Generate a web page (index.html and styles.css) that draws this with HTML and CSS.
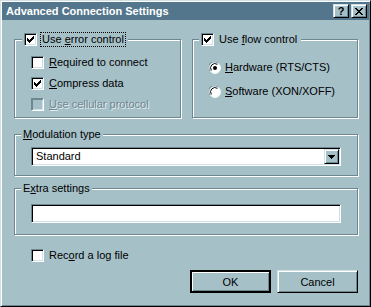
FILE: index.html
```html
<!DOCTYPE html>
<html lang="en">
<head>
  <meta charset="UTF-8" />
  <title>Advanced Connection Settings</title>
  <link rel="stylesheet" href="styles.css">
</head>
<body>

  <div class="window">
    <div class="titlebar">
      <span class="title">Advanced Connection Settings</span>
      <div class="title-buttons">
        <button class="tb-btn">?</button>
        <button class="tb-btn">
          <svg width="8" height="7" viewBox="0 0 8 7" shape-rendering="crispEdges">
            <path d="M0 0h2v1h-2zM6 0h2v1h-2zM1 1h2v1h-2zM5 1h2v1h-2zM2 2h4v1h-4zM3 3h2v1h-2zM2 4h4v1h-4zM1 5h2v1h-2zM5 5h2v1h-2zM0 6h2v1h-2zM6 6h2v1h-2z" fill="#000"/>
          </svg>
        </button>
      </div>
    </div>

    <div class="content">
      <div class="top-row">
        <!-- error control -->
        <div class="group group-error">
          <div class="legend">
            <span class="check checked"></span>
            <span class="focus">Use <u>e</u>rror control</span>
          </div>
          <div class="option"><span class="check"></span><span class="label"><u>R</u>equired to connect</span></div>
          <div class="option"><span class="check checked"></span><span class="label"><u>C</u>ompress data</span></div>
          <div class="option disabled"><span class="check"></span><span class="label"><u>U</u>se cellular protocol</span></div>
        </div>

        <!-- flow control -->
        <div class="group group-flow">
          <div class="legend">
            <span class="check checked"></span>
            <span class="nofocus">Use <u>f</u>low control</span>
          </div>
          <div class="option"><span class="radio on"></span><span class="label"><u>H</u>ardware (RTS/CTS)</span></div>
          <div class="option"><span class="radio"></span><span class="label"><u>S</u>oftware (XON/XOFF)</span></div>
        </div>
      </div>

      <div class="group group-field group-modulation">
        <div class="legend"><u>M</u>odulation type</div>
        <div class="combo">
          <span class="combo-value">Standard</span>
          <span class="combo-btn">
            <svg width="7" height="4" viewBox="0 0 7 4" shape-rendering="crispEdges">
              <path d="M0 0h7v1h-7zM1 1h5v1h-5zM2 2h3v1h-3zM3 3h1v1h-1z" fill="#000"/>
            </svg>
          </span>
        </div>
      </div>

      <div class="group group-field group-extra">
        <div class="legend">E<u>x</u>tra settings</div>
        <div class="textbox"></div>
      </div>

      <div class="option log-row"><span class="check"></span><span class="label">Rec<u>o</u>rd a log file</span></div>

      <div class="buttons">
        <button class="btn default">OK</button>
        <button class="btn">Cancel</button>
      </div>
    </div>
  </div>

</body>
</html>
```

FILE: styles.css
```css
:root {
  --face: #a6c0c8;
  --shadow: #6f8790;
  --light: #d0e0e4;
  --title: #53768c;
}
body {
  margin: 0;
  background: var(--face);
  font-family: 'Liberation Sans', Arial, sans-serif;
  font-size: 11px;
  line-height: 13px;
  color: #000;
}
u {
  text-decoration: underline;
  text-underline-offset: 1px;
}
.window {
  width: 371px;
  height: 307px;
  box-sizing: border-box;
  border: 1px solid;
  border-color: var(--light) #000 #000 var(--light);
  box-shadow: inset 1px 1px 0 #fff, inset -1px -1px 0 var(--shadow);
  padding: 1px;
  background: var(--face);
}
.titlebar {
  height: 18px;
  background: var(--title);
  display: flex;
  align-items: center;
  justify-content: space-between;
  padding: 0 2px 0 4px;
}
.title {
  color: #fff;
  font-weight: bold;
  font-size: 11px;
}
.title-buttons {
  display: flex;
  gap: 2px;
}
.tb-btn {
  width: 16px;
  height: 14px;
  padding: 0;
  margin: 0;
  background: var(--face);
  border: 1px solid;
  border-color: var(--light) #000 #000 var(--light);
  box-shadow: inset 1px 1px 0 #fff, inset -1px -1px 0 var(--shadow);
  font-family: 'Liberation Sans', Arial, sans-serif;
  font-weight: bold;
  font-size: 11px;
  line-height: 11px;
  color: #000;
  display: flex;
  align-items: center;
  justify-content: center;
}
.content {
  padding: 19px 11px 0 12px;
}
.top-row {
  display: grid;
  grid-template-columns: 167px 166px;
  gap: 11px;
}
.group {
  position: relative;
  box-sizing: border-box;
  border: 1px solid var(--shadow);
  box-shadow: inset 1px 1px 0 #fff, 1px 1px 0 #fff;
}
.group-error,
.group-flow {
  height: 79px;
  display: flex;
  flex-direction: column;
  padding-left: 16px;
}
.group-error {
  padding-top: 16px;
  gap: 8px;
}
.group-flow {
  padding-top: 21px;
  gap: 11px;
}
.legend {
  position: absolute;
  top: -7px;
  left: 6px;
  background: var(--face);
  padding: 0 2px;
  display: flex;
  align-items: center;
  height: 13px;
  white-space: nowrap;
}
.group-error .legend,
.group-flow .legend {
  height: 15px;
  top: -8px;
}
.group-error .legend {
  left: 7px;
}
.focus,
.nofocus {
  margin-left: 3px;
  padding: 0 1px;
  border: 1px dotted #000;
  line-height: 13px;
}
.nofocus {
  border-color: transparent;
}
.option {
  display: flex;
  align-items: center;
  height: 13px;
  gap: 5px;
  white-space: nowrap;
}
.option.disabled .label {
  color: var(--shadow);
  text-shadow: 1px 1px 0 #e4eef0;
}
.check {
  width: 13px;
  height: 13px;
  box-sizing: border-box;
  flex: none;
  background: #fff;
  border: 1px solid;
  border-color: var(--shadow) #fff #fff var(--shadow);
  box-shadow: inset 1px 1px 0 #000, inset -1px -1px 0 var(--light);
}
.check.checked {
  background: #fff url("data:image/svg+xml,%3Csvg xmlns='http://www.w3.org/2000/svg' width='7' height='7' shape-rendering='crispEdges'%3E%3Cpath d='M0 2h1v3h-1zM1 3h1v3h-1zM2 4h1v3h-1zM3 3h1v3h-1zM4 2h1v3h-1zM5 1h1v3h-1zM6 0h1v3h-1z' fill='%23000'/%3E%3C/svg%3E") no-repeat 2px 2px;
}
.disabled .check {
  background: var(--face);
  box-shadow: inset 1px 1px 0 var(--shadow), inset -1px -1px 0 var(--light);
  border-color: var(--shadow) #fff #fff var(--shadow);
}
.radio {
  width: 12px;
  height: 12px;
  flex: none;
  background: url("data:image/svg+xml,%3Csvg xmlns='http://www.w3.org/2000/svg' width='12' height='12'%3E%3Ccircle cx='6' cy='6' r='5.5' fill='%23fff' stroke='%23eef4f6'/%3E%3Cpath d='M1.2 9 A5.5 5.5 0 0 1 9 1.2' fill='none' stroke='%236f8790'/%3E%3Cpath d='M2.4 8.4 A4.3 4.3 0 0 1 8.4 2.4' fill='none' stroke='%23000'/%3E%3C/svg%3E") no-repeat;
}
.radio.on {
  background: url("data:image/svg+xml,%3Csvg xmlns='http://www.w3.org/2000/svg' width='12' height='12'%3E%3Ccircle cx='6' cy='6' r='5.5' fill='%23fff' stroke='%23eef4f6'/%3E%3Cpath d='M1.2 9 A5.5 5.5 0 0 1 9 1.2' fill='none' stroke='%236f8790'/%3E%3Cpath d='M2.4 8.4 A4.3 4.3 0 0 1 8.4 2.4' fill='none' stroke='%23000'/%3E%3Ccircle cx='6' cy='6' r='2' fill='%23000'/%3E%3C/svg%3E") no-repeat;
}
.group-flow .option {
  gap: 4px;
}
.group-field {
  padding: 12px 16px 9px;
}
.group-modulation {
  margin-top: 16px;
}
.group-extra {
  margin-top: 12px;
  padding-top: 15px;
  padding-bottom: 11px;
}
.combo,
.textbox {
  height: 19px;
  box-sizing: border-box;
  background: #fff;
  border: 1px solid;
  border-color: var(--shadow) #fff #fff var(--shadow);
  box-shadow: inset 1px 1px 0 #000, inset -1px -1px 0 var(--light);
  padding: 1px;
}
.combo {
  display: flex;
  align-items: center;
  justify-content: space-between;
}
.combo-value {
  padding-left: 3px;
}
.combo-btn {
  width: 15px;
  height: 15px;
  box-sizing: border-box;
  background: var(--face);
  border: 1px solid;
  border-color: var(--light) #000 #000 var(--light);
  box-shadow: inset 1px 1px 0 #fff, inset -1px -1px 0 var(--shadow);
  display: flex;
  align-items: center;
  justify-content: center;
}
.log-row {
  margin-top: 14px;
  padding-left: 17px;
}
.buttons {
  display: flex;
  justify-content: flex-end;
  gap: 6px;
  margin-top: 8px;
}
.btn {
  width: 81px;
  height: 23px;
  padding: 0;
  background: var(--face);
  border: 1px solid;
  border-color: var(--light) #000 #000 var(--light);
  box-shadow: inset 1px 1px 0 #fff, inset -1px -1px 0 var(--shadow);
  font-family: 'Liberation Sans', Arial, sans-serif;
  font-size: 11px;
  color: #000;
}
.btn.default {
  border: 2px solid #000;
  box-shadow: inset 1px 1px 0 #fff, inset -1px -1px 0 var(--shadow);
}
```
